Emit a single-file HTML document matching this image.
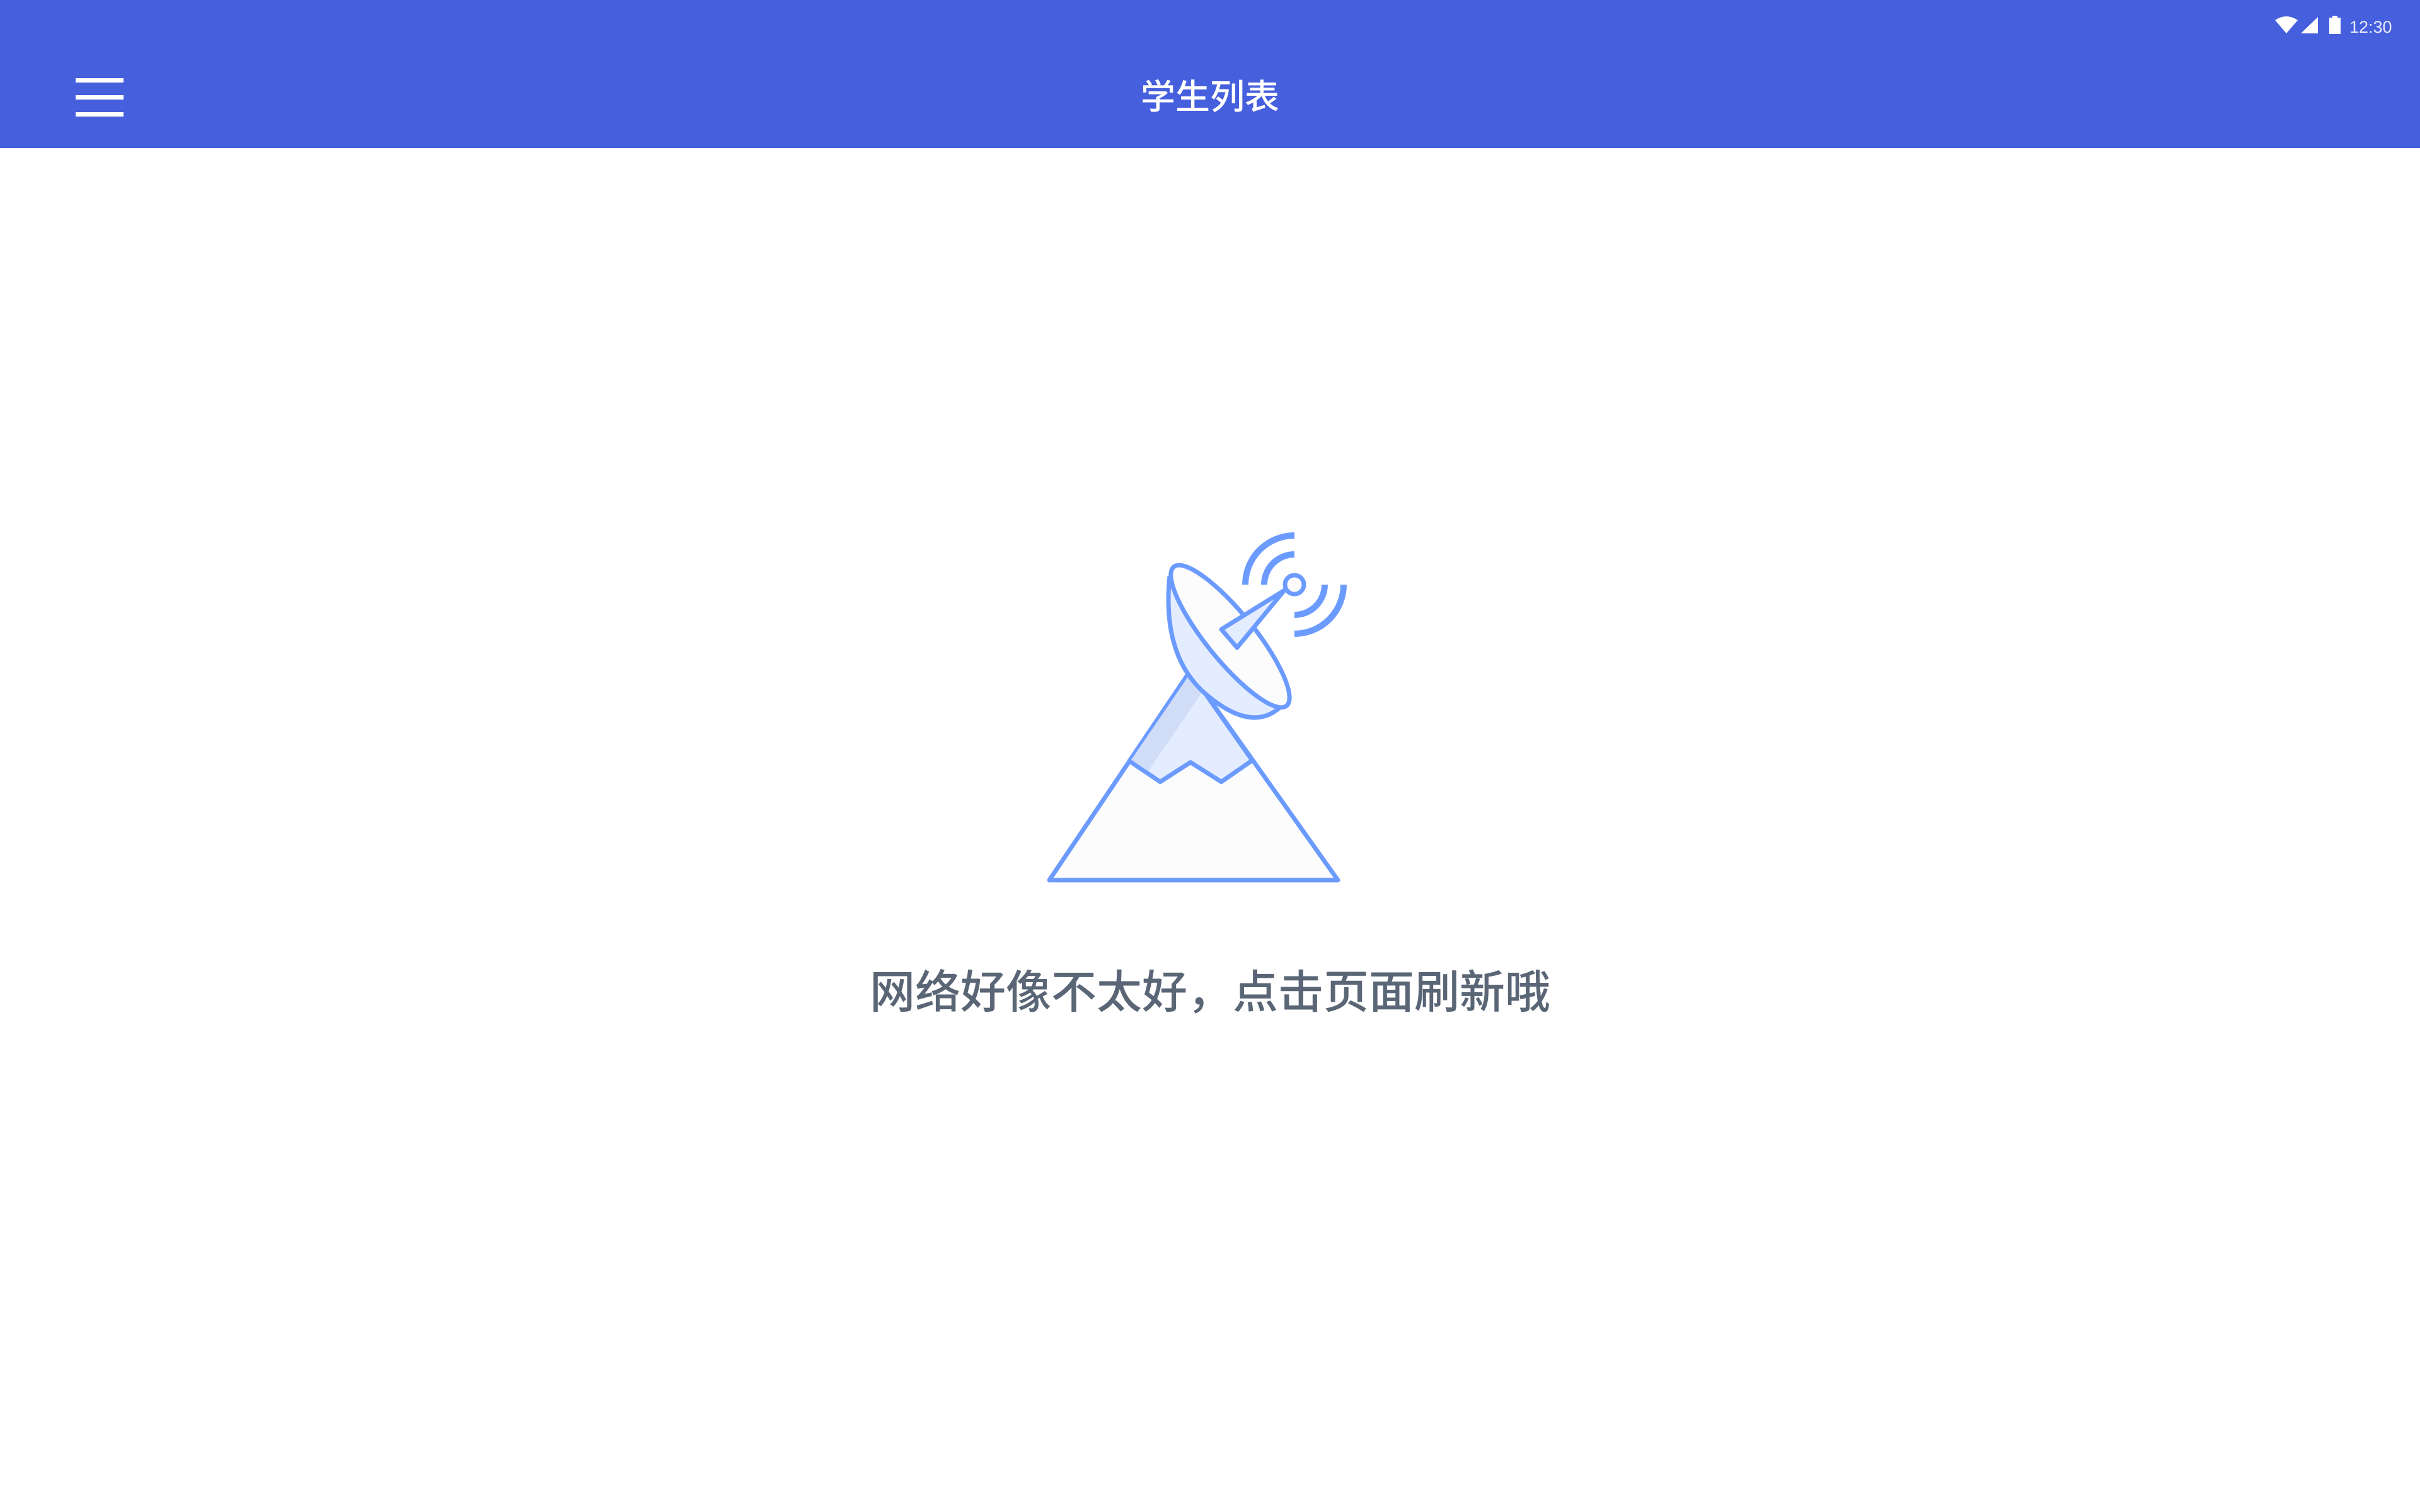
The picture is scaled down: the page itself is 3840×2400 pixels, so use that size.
<!DOCTYPE html>
<html><head><meta charset="utf-8"><style>
html,body{margin:0;padding:0;width:3840px;height:2400px;background:#fff;overflow:hidden;position:relative;font-family:"Liberation Sans","Noto Sans CJK SC",sans-serif}
.bar{position:absolute;left:0;top:0;width:3840px;height:235px;background:#455fdd}
.title{position:absolute;left:0;width:3840px;top:118px;text-align:center;color:#fff;font-size:55px;line-height:72px;font-weight:500}
.hb{position:absolute;left:120px;width:76px;height:7px;background:#fff}
.time{position:absolute;left:3728px;top:26px;color:#e6e9fa;font-size:27px;line-height:34px;font-family:"Liberation Sans",sans-serif}
.msg{position:absolute;left:0;width:3840px;top:1528px;text-align:center;color:#5a6676;font-size:72px;line-height:96px;font-weight:500}
</style></head><body>
<div class="bar"></div>
<div class="hb" style="top:124px"></div>
<div class="hb" style="top:151px"></div>
<div class="hb" style="top:178px"></div>
<div class="title">学生列表</div>
<svg style="position:absolute;left:0;top:0" width="3840" height="80">
<path d="M3610 32 Q3628 20 3646 32 L3628 53 Z" fill="#fff"/>
<path d="M3651 53 L3678 27 L3678 53 Z" fill="#fff"/>
<rect x="3696" y="28" width="18" height="26" fill="#fff"/><rect x="3701" y="25" width="8" height="4" fill="#fff"/>
</svg>
<div class="time">12:30</div>
<svg style="position:absolute;left:0;top:0" width="3840" height="2400">
<g stroke="#6c9bff" stroke-width="7" stroke-linejoin="round" fill="none">
<path d="M1665 1397 L1888 1066 L2123 1397 Z" fill="#fcfcfc"/>
<path d="M1792 1208 L1888 1066 L1987 1207 L1938 1241 L1889 1210 L1841 1241 Z" fill="#e4ecff"/>
<path d="M1795 1206 L1888 1070 L1908 1098 L1822 1224 Z" fill="#d1ddf7" stroke="none"/>
<g transform="translate(-2 -6)">
<path d="M1858 920 Q1845 1050 1918 1110 Q1990 1170 2035 1127" fill="#e4ecff"/>
<ellipse cx="1954" cy="1016" rx="142" ry="38" transform="rotate(51 1954 1016)" fill="#fcfcfc"/>
</g>
<path d="M1938 999 L2038 937 L1963 1028 Z" fill="#e4ecff"/>
<circle cx="2054" cy="928" r="15" fill="#fcfcfc"/>
</g>
<g stroke="#6c9bff" stroke-width="10" fill="none">
<path d="M2006 928 A48 48 0 0 1 2054 880"/>
<path d="M1976 928 A78 78 0 0 1 2054 850"/>
<path d="M2054 976 A48 48 0 0 0 2102 928"/>
<path d="M2054 1006 A78 78 0 0 0 2132 928"/>
</g>
</svg>
<div class="msg">网络好像不太好，点击页面刷新哦</div>
</body></html>
